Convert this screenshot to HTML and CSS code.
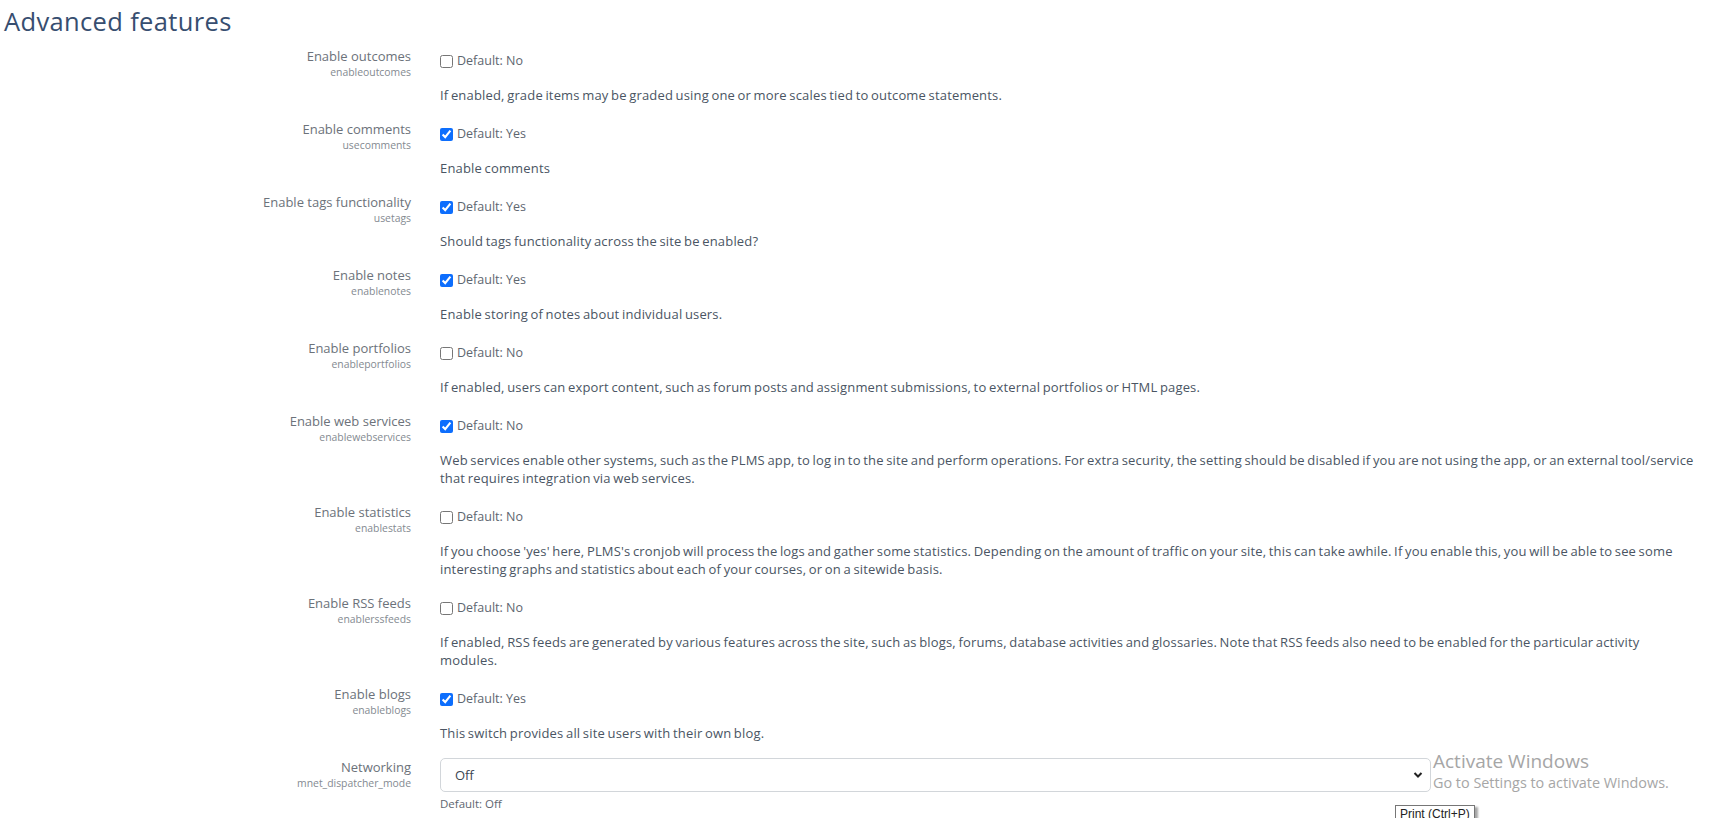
FILE: index.html
```html
<!DOCTYPE html>
<html lang="en">
<head>
<meta charset="utf-8">
<title>Advanced features</title>
<link rel="stylesheet" href="styles.css">
</head>
<body>
<div class="page">
  <h2 class="title">Advanced features</h2>

  <div class="setting">
    <div class="label"><div class="name">Enable outcomes</div><div class="code">enableoutcomes</div></div>
    <div class="content">
      <label class="check"><input type="checkbox"><span>Default: No</span></label>
      <div class="desc">If enabled, grade items may be graded using one or more scales tied to outcome statements.</div>
    </div>
  </div>

  <div class="setting">
    <div class="label"><div class="name">Enable comments</div><div class="code">usecomments</div></div>
    <div class="content">
      <label class="check"><input type="checkbox" checked><span>Default: Yes</span></label>
      <div class="desc">Enable comments</div>
    </div>
  </div>

  <div class="setting">
    <div class="label"><div class="name">Enable tags functionality</div><div class="code">usetags</div></div>
    <div class="content">
      <label class="check"><input type="checkbox" checked><span>Default: Yes</span></label>
      <div class="desc">Should tags functionality across the site be enabled?</div>
    </div>
  </div>

  <div class="setting">
    <div class="label"><div class="name">Enable notes</div><div class="code">enablenotes</div></div>
    <div class="content">
      <label class="check"><input type="checkbox" checked><span>Default: Yes</span></label>
      <div class="desc">Enable storing of notes about individual users.</div>
    </div>
  </div>

  <div class="setting">
    <div class="label"><div class="name">Enable portfolios</div><div class="code">enableportfolios</div></div>
    <div class="content">
      <label class="check"><input type="checkbox"><span>Default: No</span></label>
      <div class="desc">If enabled, users can export content, such as forum posts and assignment submissions, to external portfolios or HTML pages.</div>
    </div>
  </div>

  <div class="setting">
    <div class="label"><div class="name">Enable web services</div><div class="code">enablewebservices</div></div>
    <div class="content">
      <label class="check"><input type="checkbox" checked><span>Default: No</span></label>
      <div class="desc">Web services enable other systems, such as the PLMS app, to log in to the site and perform operations. For extra security, the setting should be disabled if you are not using the app, or an external tool/service that requires integration via web services.</div>
    </div>
  </div>

  <div class="setting">
    <div class="label"><div class="name">Enable statistics</div><div class="code">enablestats</div></div>
    <div class="content">
      <label class="check"><input type="checkbox"><span>Default: No</span></label>
      <div class="desc">If you choose 'yes' here, PLMS's cronjob will process the logs and gather some statistics. Depending on the amount of traffic on your site, this can take awhile. If you enable this, you will be able to see some interesting graphs and statistics about each of your courses, or on a sitewide basis.</div>
    </div>
  </div>

  <div class="setting">
    <div class="label"><div class="name">Enable RSS feeds</div><div class="code">enablerssfeeds</div></div>
    <div class="content">
      <label class="check"><input type="checkbox"><span>Default: No</span></label>
      <div class="desc">If enabled, RSS feeds are generated by various features across the site, such as blogs, forums, database activities and glossaries. Note that RSS feeds also need to be enabled for the particular activity modules.</div>
    </div>
  </div>

  <div class="setting">
    <div class="label"><div class="name">Enable blogs</div><div class="code">enableblogs</div></div>
    <div class="content">
      <label class="check"><input type="checkbox" checked><span>Default: Yes</span></label>
      <div class="desc">This switch provides all site users with their own blog.</div>
    </div>
  </div>

  <div class="setting">
    <div class="label"><div class="name">Networking</div><div class="code">mnet_dispatcher_mode</div></div>
    <div class="content content-select">
      <div class="select-wrap">
        <select class="select"><option>Off</option><option>Publish and subscribe</option></select>
        <svg class="chev" width="10" height="8" viewBox="0 0 10 8"><path d="M1.5 2 L5 5.5 L8.5 2" fill="none" stroke="#222" stroke-width="2"/></svg>
      </div>
      <div class="defaultinfo">Default: Off</div>
    </div>
  </div>
</div>

<div class="watermark">
  <div class="wm-title">Activate Windows</div>
  <div class="wm-sub">Go to Settings to activate Windows.</div>
</div>
<div class="tooltip">Print (Ctrl+P)</div>
</body>
</html>
```

FILE: styles.css
```css
html, body {
  margin: 0;
  padding: 0;
  overflow: hidden;
  background: #ffffff;
}
body {
  font-family: "Open Sans", "Noto Sans", sans-serif;
  font-size: 13px;
  line-height: 18px;
  color: #4a5563;
  height: 818px;
  position: relative;
}
.page {
  padding: 7px 0 0 4px;
}
.title {
  margin: 0 0 11px 0;
  font-size: 25.5px;
  line-height: 29px;
  font-weight: 400;
  color: #374e70;
  letter-spacing: 0.35px;
}
.setting {
  display: grid;
  grid-template-columns: 407px 1257px;
  column-gap: 29px;
  margin-bottom: 16px;
}
.label {
  text-align: right;
}
.name {
  color: #6c727a;
  font-size: 13px;
  line-height: 18px;
}
.code {
  color: #848a91;
  font-size: 10.4px;
  line-height: 15px;
}
.content {
  padding-top: 5px;
  min-width: 0;
}
.content-select {
  padding-top: 0;
}
.check {
  display: flex;
  align-items: center;
  height: 18px;
  color: #5e6670;
  font-size: 12.5px;
}
.check input {
  width: 13px;
  height: 13px;
  margin: 0 4px 0 0;
  accent-color: #0d6efd;
}
.desc {
  margin-top: 16px;
  color: #4a5563;
  word-spacing: -1px;
  letter-spacing: 0.17px;
}
.select-wrap {
  position: relative;
  width: 991px;
}
.select {
  display: block;
  width: 991px;
  height: 34px;
  border: 1px solid #d2d6da;
  border-radius: 5px;
  background: #ffffff;
  padding: 0 14px;
  font-family: "Open Sans", "Noto Sans", sans-serif;
  font-size: 13px;
  color: #3c4652;
  appearance: none;
  -webkit-appearance: none;
}
.chev {
  position: absolute;
  right: 8px;
  top: 13px;
}
.defaultinfo {
  margin-top: 4px;
  font-size: 11.5px;
  line-height: 16px;
  color: #5e6670;
}
.watermark {
  position: absolute;
  left: 1433px;
  top: 749px;
  color: #a6a6a6;
  font-family: "Open Sans", "Noto Sans", sans-serif;
}
.wm-title {
  font-size: 19px;
  line-height: 24px;
}
.wm-sub {
  font-size: 14.4px;
  line-height: 19px;
}
.tooltip {
  position: absolute;
  left: 1395px;
  top: 805px;
  border: 1px solid #767676;
  background: #ffffff;
  color: #222;
  font-family: "Liberation Sans", sans-serif;
  font-size: 12px;
  line-height: 16px;
  padding: 0 4px;
  box-shadow: 3px 2px 2px rgba(0,0,0,0.35);
}
```
